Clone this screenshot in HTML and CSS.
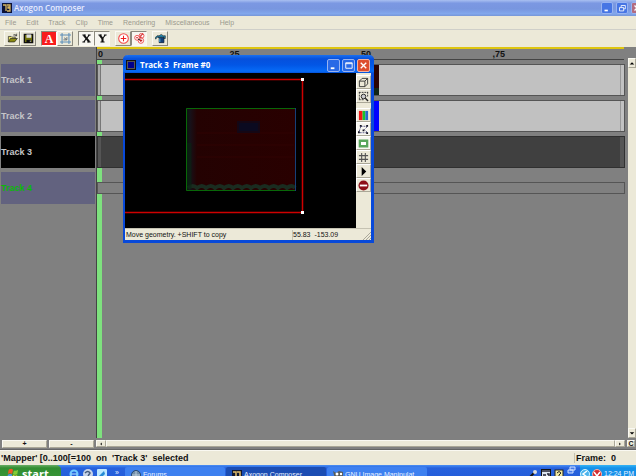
FILE: index.html
```html
<!DOCTYPE html>
<html lang="en">
<head>
<meta charset="utf-8">
<title>Axogon Composer</title>
<link rel="stylesheet" href="styles.css">
</head>
<body>
<div class="app">
  <header class="titlebar">
    <svg class="logo" viewBox="0 0 10 10"><rect width="10" height="10" fill="#0b1238"/><path d="M1 2h3v6M5 2h3v2H6v1h2v3H5" fill="none" stroke="#d9b660" stroke-width="1.3"/></svg>
    <h1>Axogon Composer</h1>
    <div class="controls">
      <button class="cap" aria-label="Minimize"><svg viewBox="0 0 12 12"><path d="M3 9h4" stroke="#fff" stroke-width="2"/></svg></button>
      <button class="cap" aria-label="Restore"><svg viewBox="0 0 12 12"><path d="M5 5V3h5v4H8M3 5.500h5v4H3z" fill="none" stroke="#fff"/></svg></button>
      <button class="cap closing" aria-label="Close"><svg viewBox="0 0 12 12"><path d="M3 3l6 6M9 3l-6 6" stroke="#fff" stroke-width="1.500"/></svg></button>
    </div>
  </header>
  <nav class="menu">
    <a href="#">File</a><a href="#">Edit</a><a href="#">Track</a><a href="#">Clip</a><a href="#">Time</a><a href="#">Rendering</a><a href="#">Miscellaneous</a><a href="#">Help</a>
  </nav>
  <div class="toolbar">
    <div class="group">
      <button class="tool" aria-label="Open"><svg viewBox="0 0 16 16"><path d="M2 13V5h4l1 1h5v3" fill="#e8e070" stroke="#222"/><path d="M2 13l3-5h10l-4 5z" fill="#8a8a10" stroke="#222"/><path d="M9 3q3-2 5 1M14 1v3h-3" fill="none" stroke="#222"/></svg></button>
      <button class="tool" aria-label="Save"><svg viewBox="0 0 16 16"><path d="M2 2h12v12H2z" fill="#77780c" stroke="#111" stroke-width="2"/><path d="M5 2h7v5H5z" fill="#ddd"/><path d="M5 10h7v4H5z" fill="#111"/><path d="M10 11h1v2h-1z" fill="#fff"/></svg></button>
    </div>
    <div class="group">
      <button class="tool letter alpha">A</button>
      <button class="tool" aria-label="Snap"><svg viewBox="0 0 16 16"><path d="M3 0v16M13 0v16M0 3h16M0 13h16" stroke="#5b8db8" stroke-width="1.500"/><path d="M10 6v4H5M9 9L6 7" fill="none" stroke="#345"/></svg></button>
    </div>
    <div class="group">
      <button class="tool pressed" aria-label="X axis"><svg viewBox="0 0 16 16"><path d="M4 3l8 10" stroke="#111" stroke-width="3"/><path d="M12 3L4 13M2 3h5M10 3h4M2 13h4M9 13h5" stroke="#111" stroke-width="1.500"/></svg></button>
      <button class="tool pressed" aria-label="Y axis"><svg viewBox="0 0 16 16"><path d="M4 3l4 5v5" fill="none" stroke="#111" stroke-width="3"/><path d="M12 3L8 8M2 3h5M10 3h4M5 13h6" fill="none" stroke="#111" stroke-width="1.500"/></svg></button>
    </div>
    <div class="group">
      <button class="tool" aria-label="Add key"><svg viewBox="0 0 16 16"><circle cx="8" cy="8" r="7" fill="#fff" stroke="#f24848" stroke-width="1.500"/><path d="M8 4v8M4 8h8" stroke="#f01c1c" stroke-width="1.500"/></svg></button>
      <button class="tool pressed" aria-label="Move keys"><svg viewBox="0 0 16 16"><g fill="#fff" stroke="#ee4545" stroke-width="1.300"><circle cx="11" cy="4" r="3.500"/><circle cx="4.500" cy="7" r="3.500"/><circle cx="10" cy="11" r="4"/></g><path d="M9 5l4-4M3 7h3M8 11h4M10 9v4M10 5v3" stroke="#c22" stroke-width="1.500"/><path d="M6 9l3 1" stroke="#222" stroke-width="1.500"/></svg></button>
    </div>
    <div class="group">
      <button class="tool" aria-label="Render"><svg viewBox="0 0 16 16"><path d="M5 6h8v8H6V8z" fill="#123f78" stroke="#0c1c38"/><path d="M0 7l3-3h3l3-2 3 2h3v4h-2V6H3L1 9z" fill="#258cb4" stroke="#111" stroke-width=".8"/><path d="M7 8v5" stroke="#55b8dc" stroke-width="1.500"/></svg></button>
    </div>
  </div>

  <main class="workspace">
    <div class="tracks">
      <div class="track">Track 1</div>
      <div class="track">Track 2</div>
      <div class="track selected">Track 3</div>
      <div class="track muted">Track 4</div>
    </div>
    <div class="timeline">
      <div class="ruler"><span>0</span><span>25</span><span>50</span><span>,75</span></div>
      <div class="lanes">
        <div class="lane light"><div class="clip video"></div></div>
        <div class="lane light"><div class="clip blue"></div></div>
        <div class="lane dark"></div>
        <div class="lane empty"></div>
      </div>
    </div>
    <div class="vscroll">
      <button class="bar" aria-label="Scroll up"><svg viewBox="0 0 8 8"><path d="M1 6l3-3 3 3z"/></svg></button>
      <button class="bar" aria-label="Scroll down"><svg viewBox="0 0 8 8"><path d="M1 3h6L4 6z"/></svg></button>
    </div>

    <section class="window">
      <header class="window-title">
        <svg class="window-icon" viewBox="0 0 10 10"><rect x=".5" y=".5" width="9" height="9" fill="#555" stroke="#111"/><rect x="2" y="2" width="6" height="6" fill="#00008c"/></svg>
        <h2>Track 3  Frame #0</h2>
        <div class="controls">
          <button class="cap bright" aria-label="Minimize preview"><svg viewBox="0 0 12 12"><path d="M3 9h4" stroke="#fff" stroke-width="2"/></svg></button>
          <button class="cap bright" aria-label="Maximize preview"><svg viewBox="0 0 12 12"><path d="M3 3h7v6H3zM3 4h7" fill="none" stroke="#fff"/></svg></button>
          <button class="cap red" aria-label="Close preview"><svg viewBox="0 0 12 12"><path d="M3 3l6 6M9 3l-6 6" stroke="#fff" stroke-width="1.500"/></svg></button>
        </div>
      </header>
      <div class="window-body">
        <svg class="canvas" viewBox="0 0 231 155" preserveAspectRatio="xMinYMin slice">
          <defs>
            <linearGradient id="shade"><stop offset="0" stop-color="#071a0b"/><stop offset=".04" stop-color="#171119"/><stop offset=".1" stop-color="#240202"/><stop offset="1" stop-color="#290000"/></linearGradient>
          </defs>
          <rect width="231" height="155" fill="#000"/>
          <rect x="61" y="35" width="109" height="83" fill="url(#shade)"/>
          <path d="M72 60h97M72 72h97M72 84h97" stroke="#300303"/>
          <rect x="112" y="48" width="23" height="12" fill="#150714"/>
          <rect x="114" y="50" width="19" height="8" fill="#0b0a20"/>
          <path d="M63 115q5-4 9 0q5-4 9 0q5-4 9 0q5-4 9 0q5-4 9 0q5-4 9 0q5-4 9 0q5-4 9 0q5-4 9 0q5-4 9 0q5-4 9 0q5-4 8 0" fill="none" stroke="#1a2c20" stroke-width="4"/>
          <path d="M64 70v46" stroke="#092513" stroke-width="5" opacity=".6"/>
          <path d="M170 35.500H61.500v82H170" fill="none" stroke="#086708"/>
          <path d="M170.500 35v83" stroke="#173f79"/>
          <path d="M0 6.500h177.500M0 139.500h177.500M177.500 6v134" stroke="#ce0000" stroke-width="1.500"/>
          <path d="M176 5h3v3h-3zM176 138h3v3h-3z" fill="#fff"/>
        </svg>
        <div class="palette">
          <button aria-label="Box"><svg viewBox="0 0 12 12"><path d="M1.500 4.500h6v6h-6zM1.500 4.500l3-3h6l-3 3M10.500 1.500v6l-3 3" fill="none" stroke="#333"/></svg></button>
          <button aria-label="Zoom"><svg viewBox="0 0 12 12"><path d="M1 1.500h10M1.500 1v9M10.500 1v5M1 9.500h5" stroke="#333" stroke-dasharray="2 1"/><circle cx="6" cy="6" r="2.500" fill="#ccc" stroke="#222"/><path d="M8 8l3 3" stroke="#222" stroke-width="1.500"/></svg></button>
          <button class="spaced" aria-label="Channels"><svg viewBox="0 0 12 12"><path d="M1 1h4v10H1z" fill="#f01515"/><path d="M5 1h3v10H5z" fill="#19c42a"/><path d="M8 1h3v10H8z" fill="#2768c8"/></svg></button>
          <button class="on" aria-label="Geometry"><svg viewBox="0 0 12 12"><path d="M3 2.500h7M2 9.500h8M3 3L1 9M10 3L7 6l3 3" fill="none" stroke="#558" stroke-dasharray="2 1"/><path d="M2 1h2v2H2zM9 1h2v2H9zM0 8h2v2H0zM9 9h2v2H9zM5 6h2v2H5z" fill="#112"/></svg></button>
          <button class="on" aria-label="Frame"><svg viewBox="0 0 12 12"><path d="M2 3h8v6H2z" fill="#fff" stroke="#58a65c" stroke-width="2.500"/></svg></button>
          <button aria-label="Grid"><svg viewBox="0 0 12 12"><path d="M4 1v10M8 1v10M1 4h10M1 8h10" stroke="#555" stroke-width="1.200"/></svg></button>
          <button aria-label="Play"><svg viewBox="0 0 12 12"><path d="M4 1l5 5-5 5z" fill="#000"/></svg></button>
          <button aria-label="Stop"><svg viewBox="0 0 12 12"><circle cx="6" cy="6" r="5.500" fill="#8e1018"/><path d="M2 6h8" stroke="#fff" stroke-width="2"/></svg></button>
        </div>
      </div>
      <footer class="window-status"><span>Move geometry. +SHIFT to copy</span><span class="coords">55.83  -153.09</span><svg class="grip" viewBox="0 0 8 8"><path d="M0 8l8-8M3 8l5-5M6 8l2-2" stroke="#aaa89a"/></svg></footer>
    </section>
  </main>

  <div class="bottom">
    <div class="zoomers"><button class="bar">+</button><button class="bar">-</button></div>
    <div class="hscroll">
      <button class="bar" aria-label="Scroll left"><svg viewBox="0 0 8 8"><path d="M5 2v4L3 4z"/></svg></button>
      <div class="bar thumb"></div>
      <button class="bar" aria-label="Scroll right"><svg viewBox="0 0 8 8"><path d="M3 2v4l2-2z"/></svg></button>
    </div>
    <button class="bar corner">C</button>
  </div>
  <div class="status"><span>'Mapper' [0..100[=100  on  'Track 3'  selected</span><span class="frame">Frame:  0</span></div>

  <footer class="taskbar">
    <button class="start"><svg viewBox="0 0 14 14"><path d="M2 2q3-2 5 0L6 7Q3 5 1 7z" fill="#ee5825"/><path d="M8 3q3 1 5-1l-1 5q-3 2-5 0z" fill="#83cb35"/><path d="M1 8q3-2 5 0l-1 5q-2-2-5 0z" fill="#5797f0"/><path d="M7 8q3 2 5 0l-1 5q-3 2-5 0z" fill="#f7d22f"/></svg>start</button>
    <div class="quick">
      <svg viewBox="0 0 10 10"><circle cx="5" cy="5" r="3.500" fill="none" stroke="#70caff" stroke-width="2"/><path d="M2 5h6" stroke="#b8e8ff"/></svg>
      <svg viewBox="0 0 10 10"><circle cx="5" cy="5" r="5" fill="#c7d3e8"/><path d="M2 4q3-3 5 0L5 7" fill="none" stroke="#465b7b" stroke-width="1.500"/></svg>
      <svg viewBox="0 0 10 10"><rect width="10" height="10" rx="1" fill="#bee8ff"/><path d="M2 7l5-5 1 3-4 4z" fill="#268bd5"/></svg>
      <span>»</span>
    </div>
    <div class="tasks">
      <button class="task"><svg viewBox="0 0 10 10"><circle cx="5" cy="5" r="4.500" fill="#718da8" stroke="#234671"/><path d="M1 5h8M5 1v8" stroke="#b9cbd8"/></svg>Forums</button>
      <button class="task active"><svg viewBox="0 0 10 10"><rect width="10" height="10" fill="#111831"/><path d="M1 2h3v6M5 2h3v6H5" fill="none" stroke="#e2bd69" stroke-width="1.500"/></svg>Axogon Composer</button>
      <button class="task"><svg viewBox="0 0 10 10"><path d="M0 1l3 2 3-2 4 1v7H2z" fill="#575a57"/><circle cx="4" cy="4" r="1.500" fill="#fff"/><circle cx="8" cy="4" r="1.200" fill="#fff"/></svg>GNU Image Manipulat...</button>
    </div>
    <div class="helpers">
      <svg viewBox="0 0 10 10"><path d="M1 9l6-6" stroke="#111" stroke-width="2"/><circle cx="7" cy="3" r="2" fill="#ddd"/></svg>
      <svg viewBox="0 0 10 10"><rect x=".5" y=".5" width="9" height="9" fill="#dde5f0" stroke="#111"/><path d="M1 2h8M2 6h3M6 5h2v3" stroke="#223" stroke-width="1.500" fill="none"/></svg>
      <svg viewBox="0 0 10 10"><rect x="1" y="1" width="8" height="9" fill="#f0e7a0" stroke="#222"/><path d="M3 4q2-3 4 0L5 6v2" fill="none" stroke="#222"/></svg>
      <svg class="raised" viewBox="0 0 10 10"><path d="M3 1h5v3H3zM1 4h5v3H1z" fill="#477bea" stroke="#cfe0ff"/></svg>
    </div>
    <div class="tray">
      <svg viewBox="0 0 10 10"><circle cx="5" cy="5" r="4.500" fill="#4db4ed" stroke="#d4f3ff"/><path d="M7 2L3 5l4 3" fill="none" stroke="#fff" stroke-width="1.500"/></svg>
      <svg viewBox="0 0 10 10"><circle cx="5" cy="5" r="4.500" fill="#d32d31" stroke="#f8b4aa"/><path d="M2 3l3 4 3-4" fill="none" stroke="#fff" stroke-width="1.500"/></svg>
      <time>12:24 PM</time>
    </div>
  </footer>
</div>
</body>
</html>
```
FILE: styles.css
```css
* { box-sizing: border-box; }
body { margin: 0; font: 7px/10px "Liberation Sans", Arial, sans-serif; color: #111; }
button { margin: 0; padding: 0; border: 0; font: inherit; color: inherit; background: #ece9d8; }
a { color: inherit; text-decoration: none; }
svg { display: block; flex: none; }
h1, h2 { margin: 0; font: bold 8px/10px "Open Sans", "Liberation Sans", sans-serif; white-space: pre; color: #e8edff; }
.app { display: flex; flex-direction: column; height: 100vh; overflow: hidden; background: #ece9d8; }

.titlebar { display: flex; align-items: center; height: 16px; padding-left: 2px; flex: none; overflow: hidden; background: linear-gradient(#a9c0f1, #7b98e2 20%, #7896df 55%, #82a7ec 85%, #7797d8); }
.titlebar h1 { margin-left: 2px; font-weight: 600; }
.logo { width: 10px; height: 10px; }
.controls { display: flex; gap: 2px; margin-left: auto; }
.titlebar .controls { gap: 3px; margin-right: -7px; }
.cap { width: 12px; height: 12px; border: 1px solid #98b3f1; border-radius: 2px; background: #4775e4; }
.cap svg { width: 10px; height: 10px; }
.closing { background: #b26b80; }

.menu { display: flex; gap: 10px; align-items: center; height: 13px; padding-left: 5px; flex: none; color: #9b998e; }
.toolbar { display: flex; gap: 5px; align-items: center; height: 18px; padding-left: 4px; flex: none; border-top: 1px solid #cfcfc9; }
.group { display: flex; }
.tool { display: grid; place-items: center; width: 16px; height: 15px; border: 1px solid; border-color: #faf9f2 #8c8a7e #8c8a7e #faf9f2; }
.tool svg { width: 11px; height: 11px; }
.pressed { background: #f7f6f0; border-color: #8c8a7e #faf9f2 #faf9f2 #8c8a7e; }
.letter { font: bold 12px/12px "Liberation Serif", serif; color: #fff; }
.alpha { background: #f81d1d; border-color: #8c8a7e #fff #fff #8c8a7e; }

.workspace { position: relative; display: flex; flex: 1; min-height: 0; background: #808080; }
.tracks { display: flex; flex-direction: column; gap: 4px; width: 96px; padding: 17px 1px 0; flex: none; }
.track { display: flex; align-items: center; height: 32px; background: #62627f; color: #c5c5c8; font: bold 8px/10px "Liberation Sans", sans-serif; }
.track, .status { font: bold 9px/10px "Liberation Sans", sans-serif; }
.selected { background: #000; }
.muted { color: #0bb80b; }
.timeline { display: flex; flex-direction: column; flex: 1; border-left: 1px solid #444; }
.ruler { display: grid; grid-template-columns: repeat(4, 1fr); height: 13px; margin-right: 4px; padding-left: 1px; border-top: 2px solid #dec510; border-bottom: 1px solid #444; font: bold 9px/10px "Liberation Sans", sans-serif; flex: none; }
.lanes { display: flex; flex-direction: column; gap: 4px; flex: 1; padding: 4px 3px 0 0; background: linear-gradient(90deg, #7ee17e 5px, transparent 5px); }
.lane { display: flex; height: 32px; border: 1px solid #555; }
.light { background: linear-gradient(90deg, #aaa 2px, #777 2px, #777 3px, #c1c1c1 3px, #c1c1c1 calc(100% - 4px), #999 calc(100% - 4px), #999 calc(100% - 3px), #c1c1c1 calc(100% - 3px)); }
.dark { background: linear-gradient(90deg, #555 3px, #404040 3px, #404040 calc(100% - 4px), #555 calc(100% - 4px)); border-color: #303030; }
.empty { height: 12px; margin-top: 10px; background: #808080; }
.clip { width: 50px; margin-left: 44%; }
.video { background: linear-gradient(#2b0202 78%, #102416 78%); }
.blue { background: #00f; }
.vscroll { display: flex; flex-direction: column; justify-content: space-between; width: 8px; margin-top: 11px; flex: none; background: #ece9d8; }
.bar { display: grid; place-items: center; border: 1px solid; border-color: #faf9f2 #aaa797 #aaa797 #faf9f2; background: #ece9d8; font-weight: bold; line-height: 6px; }
.vscroll .bar { height: 10px; }
.bar svg { width: 6px; height: 6px; }

.window { position: absolute; left: 123px; top: 8px; width: 251px; border: solid #0849d9; border-width: 0 3px 3px 2px; border-radius: 5px 5px 0 0; background: #ece9d8; }
.window-title { display: flex; align-items: center; gap: 4px; height: 18px; margin: 0 -3px 0 -2px; padding: 2px 4px 0 3px; border-radius: 5px 5px 0 0; background: linear-gradient(#1b70ef, #0650dc 22%, #0256e5 55%, #066bf7 90%, #0450d6); }
.window-title h2 { color: #fff; }
.window-icon { width: 10px; height: 10px; }
.bright { background: #2969e6; }
.red { background: #dd4d2e; border-color: #f1b3a5; }
.window-title .cap { width: 13px; height: 13px; }
.window-title .cap svg { width: 11px; height: 11px; }
.window-body { display: flex; height: 155px; background: #000; }
.canvas { flex: 1; min-width: 0; height: 155px; }
.palette { width: 15px; padding-top: 2px; background: #ece9d8; }
.palette button { display: grid; place-items: center; width: 15px; height: 14px; border: 1px solid; border-color: #fff #aaa797 #aaa797 #fff; }
.palette svg { width: 11px; height: 11px; }
.palette .spaced { margin-top: 5px; }
.palette .on { background: #f8f7f1; }
.window-status { display: flex; align-items: center; height: 12px; padding-left: 1px; border-top: 1px solid #c5c2b2; white-space: pre; }
.coords { width: 71px; margin-left: auto; border-left: 1px solid #c5c2b2; }
.grip { width: 8px; height: 8px; align-self: flex-end; }

.bottom { display: flex; gap: 2px; height: 12px; padding: 2px 1px 2px 2px; flex: none; background: #808080; border-bottom: 1px solid #666; }
.zoomers { display: grid; grid-template-columns: 1fr 1fr; gap: 2px; width: 92px; }
.hscroll { display: flex; flex: 1; }
.hscroll button { width: 10px; }
.thumb { flex: 1; }
.corner { width: 8px; }
.status { display: flex; justify-content: space-between; align-items: center; height: 15px; padding-left: 1px; flex: none; border-top: 1px solid #faf9f2; white-space: pre; }
.frame { width: 62px; padding-left: 1px; border-left: 1px solid #c5c2b2; }

.taskbar { display: flex; height: 11px; flex: none; overflow: hidden; color: #e8f0ff; background: linear-gradient(#4a90f5, #2762dd 3px, #245edb); }
.taskbar > * { height: 18px; }
.taskbar svg { width: 10px; height: 10px; }
.start { display: flex; align-items: center; gap: 3px; width: 61px; padding-left: 7px; flex: none; border-radius: 0 5px 5px 0; background: linear-gradient(#69ad65, #318d31 3px, #3b983b); color: #fff; font: bold 11px/14px "Open Sans", sans-serif; }
.taskbar .start svg { width: 12px; height: 12px; }
.quick { display: flex; align-items: center; gap: 4px; width: 64px; padding-left: 8px; flex: none; }
.quick span { margin: -3px 0 0 4px; }
.tasks { display: grid; grid-template-columns: repeat(3, 100px); gap: 1px; margin-right: auto; }
.task { display: flex; align-items: center; gap: 2px; height: 18px; margin-top: 2px; padding: 0 0 3px 6px; border-radius: 2px; background: #3d80f0; white-space: nowrap; }
.active { background: #1b4db3; }
.helpers { display: flex; align-items: center; gap: 3px; padding-right: 3px; }
.raised { margin-top: -6px; }
.tray { display: flex; align-items: center; gap: 2px; width: 56px; flex: none; background: linear-gradient(#35b5f5, #1491e9 3px, #1290e8); white-space: nowrap; }
```
